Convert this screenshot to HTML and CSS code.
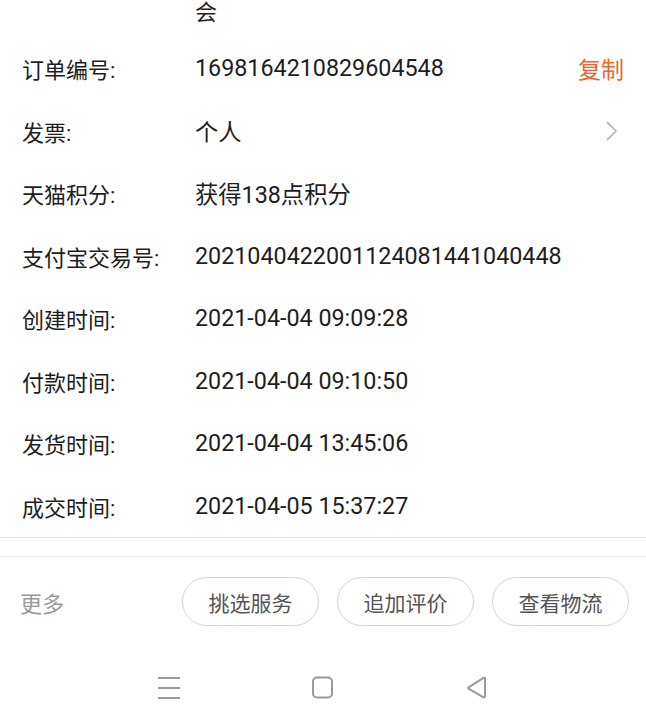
FILE: index.html
```html
<!DOCTYPE html>
<html lang="zh-CN">
<head>
    <meta charset="UTF-8">
    <title>订单详情</title>
    <link rel="stylesheet" href="styles.css">
</head>
<body>
    <div id="page">
        <div class="info">
            <div class="tail">会</div>
            <div class="row">
                <span class="label">订单编号:</span>
                <span class="value">1698164210829604548</span>
                <span class="copy">复制</span>
            </div>
            <div class="row">
                <span class="label">发票:</span>
                <span class="value">个人</span>
                <svg class="arrow" width="14" height="22" viewBox="0 0 14 22">
                    <polyline points="2,2 11,11 2,20" fill="none" stroke="#bcbcbc" stroke-width="1.8"/>
                </svg>
            </div>
            <div class="row">
                <span class="label">天猫积分:</span>
                <span class="value">获得138点积分</span>
            </div>
            <div class="row">
                <span class="label">支付宝交易号:</span>
                <span class="value">2021040422001124081441040448</span>
            </div>
            <div class="row">
                <span class="label">创建时间:</span>
                <span class="value">2021-04-04 09:09:28</span>
            </div>
            <div class="row">
                <span class="label">付款时间:</span>
                <span class="value">2021-04-04 09:10:50</span>
            </div>
            <div class="row">
                <span class="label">发货时间:</span>
                <span class="value">2021-04-04 13:45:06</span>
            </div>
            <div class="row">
                <span class="label">成交时间:</span>
                <span class="value">2021-04-05 15:37:27</span>
            </div>
        </div>
        <div class="spacer"></div>
        <div class="actions">
            <span class="more">更多</span>
            <div class="btns">
                <span class="btn">挑选服务</span>
                <span class="btn">追加评价</span>
                <span class="btn">查看物流</span>
            </div>
        </div>
        <div class="nav">
            <div class="nav-item">
                <svg width="24" height="24" viewBox="0 0 24 24">
                    <path d="M1 2H23M1 12H23M1 22H23" stroke="#9a9a9a" stroke-width="2" fill="none"/>
                </svg>
            </div>
            <div class="nav-item">
                <svg width="24" height="24" viewBox="0 0 24 24">
                    <rect x="2" y="1.5" width="19" height="20" rx="4" ry="4" stroke="#9a9a9a" stroke-width="2" fill="none"/>
                </svg>
            </div>
            <div class="nav-item">
                <svg width="24" height="24" viewBox="0 0 24 24">
                    <path d="M20 2.5V20.5a1 1 0 0 1-1.5 0.8L3.5 12.6a0.8 0.8 0 0 1 0-1.3L18.5 1.8A1 1 0 0 1 20 2.5Z" stroke="#9a9a9a" stroke-width="2" fill="none" stroke-linejoin="round"/>
                </svg>
            </div>
        </div>
    </div>
</body>
</html>
```

FILE: styles.css
```css
*{
    padding: 0;
    margin: 0;
    box-sizing: border-box;
}
body{
    background: #ffffff;
    font-family: Roboto, "Noto Sans CJK SC", sans-serif;
    color: #1e1e1e;
}
#page{
    width: 646px;
    height: 728px;
    overflow: hidden;
    display: flex;
    flex-direction: column;
}
.info{
    border-bottom: 1px solid #e6e6e6;
}
.tail{
    height: 37px;
    padding-left: 195px;
    font-size: 22px;
    line-height: 25px;
}
.row{
    height: 62.5px;
    display: flex;
    align-items: center;
    padding: 0 22px;
    font-size: 22px;
}
.label{
    width: 173px;
    flex-shrink: 0;
}
.value{
    flex: 1;
    font-size: 23.3px;
}
.copy{
    color: #e8672a;
    font-size: 23px;
    margin-right: 0;
}
.arrow{
    margin-right: 5px;
}
.spacer{
    height: 19px;
    border-bottom: 1px solid #e6e6e6;
}
.actions{
    height: 93px;
    display: flex;
    align-items: center;
    justify-content: space-between;
    padding: 0 17px 4px 20px;
}
.more{
    font-size: 22px;
    color: #999999;
}
.btns{
    display: flex;
    gap: 18px;
}
.btn{
    width: 137px;
    height: 49px;
    border: 1.5px solid #d4d4d4;
    border-radius: 25px;
    display: flex;
    align-items: center;
    justify-content: center;
    font-size: 21px;
    color: #555555;
}
.nav{
    flex: 1;
    display: flex;
    justify-content: center;
    align-items: center;
    padding-bottom: 2px;
}
.nav-item{
    width: 154px;
    display: flex;
    justify-content: center;
}
```
